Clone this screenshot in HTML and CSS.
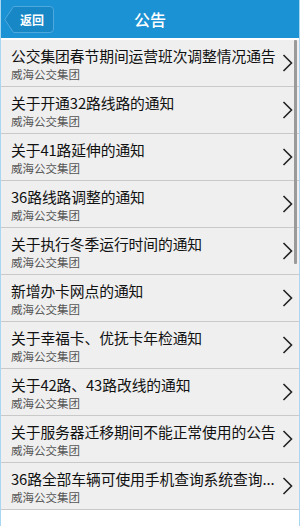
FILE: index.html
```html
<!DOCTYPE html>
<html lang="zh">
<head>
    <meta charset="UTF-8">
    <meta name="viewport" content="width=device-width, initial-scale=1.0">
    <title>公告</title>
    <link rel="stylesheet" href="styles.css">
</head>
<body>
    <div class="app">
        <div class="header">
            <div class="back">
                <svg class="back-bg" width="50" height="27" viewBox="0 0 50 27">
                    <path d="M9.5 0.5 H46 Q49.5 0.5 49.5 4 V23 Q49.5 26.5 46 26.5 H9.5 L0.8 13.5 Z" fill="#1887c6" stroke="#4ea8de" stroke-width="1"/>
                </svg>
                <span class="back-text">返回</span>
            </div>
            <div class="title">公告</div>
            <div></div>
        </div>

        <div class="list">
            <div class="row">
                <div class="row-text">
                    <p class="row-title">公交集团春节期间运营班次调整情况通告</p>
                    <p class="row-sub">威海公交集团</p>
                </div>
                <svg class="chev" width="11" height="18" viewBox="0 0 11 18"><path d="M1.5 1 L9.5 9 L1.5 17" fill="none" stroke="#222" stroke-width="1.6"/></svg>
            </div>
            <div class="row">
                <div class="row-text">
                    <p class="row-title">关于开通32路线路的通知</p>
                    <p class="row-sub">威海公交集团</p>
                </div>
                <svg class="chev" width="11" height="18" viewBox="0 0 11 18"><path d="M1.5 1 L9.5 9 L1.5 17" fill="none" stroke="#222" stroke-width="1.6"/></svg>
            </div>
            <div class="row">
                <div class="row-text">
                    <p class="row-title">关于41路延伸的通知</p>
                    <p class="row-sub">威海公交集团</p>
                </div>
                <svg class="chev" width="11" height="18" viewBox="0 0 11 18"><path d="M1.5 1 L9.5 9 L1.5 17" fill="none" stroke="#222" stroke-width="1.6"/></svg>
            </div>
            <div class="row">
                <div class="row-text">
                    <p class="row-title">36路线路调整的通知</p>
                    <p class="row-sub">威海公交集团</p>
                </div>
                <svg class="chev" width="11" height="18" viewBox="0 0 11 18"><path d="M1.5 1 L9.5 9 L1.5 17" fill="none" stroke="#222" stroke-width="1.6"/></svg>
            </div>
            <div class="row">
                <div class="row-text">
                    <p class="row-title">关于执行冬季运行时间的通知</p>
                    <p class="row-sub">威海公交集团</p>
                </div>
                <svg class="chev" width="11" height="18" viewBox="0 0 11 18"><path d="M1.5 1 L9.5 9 L1.5 17" fill="none" stroke="#222" stroke-width="1.6"/></svg>
            </div>
            <div class="row">
                <div class="row-text">
                    <p class="row-title">新增办卡网点的通知</p>
                    <p class="row-sub">威海公交集团</p>
                </div>
                <svg class="chev" width="11" height="18" viewBox="0 0 11 18"><path d="M1.5 1 L9.5 9 L1.5 17" fill="none" stroke="#222" stroke-width="1.6"/></svg>
            </div>
            <div class="row">
                <div class="row-text">
                    <p class="row-title">关于幸福卡、优抚卡年检通知</p>
                    <p class="row-sub">威海公交集团</p>
                </div>
                <svg class="chev" width="11" height="18" viewBox="0 0 11 18"><path d="M1.5 1 L9.5 9 L1.5 17" fill="none" stroke="#222" stroke-width="1.6"/></svg>
            </div>
            <div class="row">
                <div class="row-text">
                    <p class="row-title">关于42路、43路改线的通知</p>
                    <p class="row-sub">威海公交集团</p>
                </div>
                <svg class="chev" width="11" height="18" viewBox="0 0 11 18"><path d="M1.5 1 L9.5 9 L1.5 17" fill="none" stroke="#222" stroke-width="1.6"/></svg>
            </div>
            <div class="row">
                <div class="row-text">
                    <p class="row-title">关于服务器迁移期间不能正常使用的公告</p>
                    <p class="row-sub">威海公交集团</p>
                </div>
                <svg class="chev" width="11" height="18" viewBox="0 0 11 18"><path d="M1.5 1 L9.5 9 L1.5 17" fill="none" stroke="#222" stroke-width="1.6"/></svg>
            </div>
            <div class="row">
                <div class="row-text">
                    <p class="row-title">36路全部车辆可使用手机查询系统查询...</p>
                    <p class="row-sub">威海公交集团</p>
                </div>
                <svg class="chev" width="11" height="18" viewBox="0 0 11 18"><path d="M1.5 1 L9.5 9 L1.5 17" fill="none" stroke="#222" stroke-width="1.6"/></svg>
            </div>
        </div>

        <!-- scroll indicator lies over the list -->
        <div class="scrollbar"></div>
    </div>
</body>
</html>
```

FILE: styles.css
```css
body {
    margin: 0;
    background-color: #ffffff;
    font-family: "Noto Sans CJK SC", "Noto Sans", sans-serif;
}
p {
    margin: 0;
}
.app {
    position: relative;
    width: 300px;
    height: 526px;
    box-sizing: border-box;
    border-left: 1px solid #a9d6f0;
    border-right: 1px solid #a9d6f0;
    background-color: #ffffff;
    overflow: hidden;
}
.header {
    height: 38px;
    background-color: #1b92d3;
    display: grid;
    grid-template-columns: 1fr auto 1fr;
    align-items: center;
}
.back {
    position: relative;
    width: 50px;
    height: 27px;
    margin-left: 3px;
    display: flex;
    align-items: center;
    justify-content: center;
}
.back-bg {
    position: absolute;
    left: 0;
    top: 0;
}
.back-text {
    position: relative;
    color: #ffffff;
    font-size: 12px;
    font-weight: bold;
    padding-left: 6px;
}
.title {
    color: #ffffff;
    font-size: 16px;
    font-weight: 500;
}
.list {
    padding-top: 2px;
}
.row {
    height: 46px;
    border-bottom: 1px solid #c9c9c9;
    background-color: #efefef;
    display: flex;
    align-items: flex-start;
    padding-left: 10px;
    padding-right: 6px;
}
.row-text {
    flex: 1;
    min-width: 0;
    padding-top: 5px;
}
.row-title {
    font-size: 14.8px;
    line-height: 21px;
    color: #111111;
    white-space: nowrap;
    letter-spacing: -0.1px;
}
.row-sub {
    font-size: 11.5px;
    line-height: 17px;
    color: #555555;
}
.chev {
    flex: none;
    align-self: center;
}
.scrollbar {
    position: absolute;
    right: 2px;
    top: 40px;
    width: 3px;
    height: 224px;
    background-color: #9a9a9a;
    border-radius: 1px;
}
```
